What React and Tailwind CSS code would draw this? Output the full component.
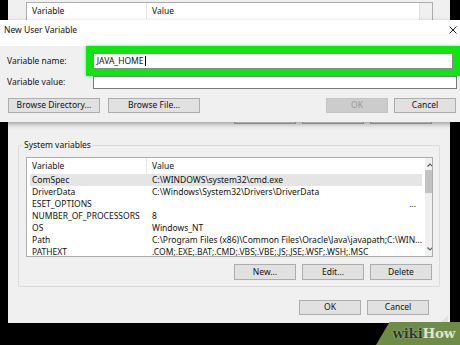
import React from "react";

const rows = [
  ["ComSpec", "C:\\WINDOWS\\system32\\cmd.exe", true],
  ["DriverData", "C:\\Windows\\System32\\Drivers\\DriverData"],
  ["ESET_OPTIONS", "", false, true],
  ["NUMBER_OF_PROCESSORS", "8"],
  ["OS", "Windows_NT"],
  ["Path", "C:\\Program Files (x86)\\Common Files\\Oracle\\Java\\javapath;C:\\WIN..."],
  ["PATHEXT", ".COM;.EXE;.BAT;.CMD;.VBS;.VBE;.JS;.JSE;.WSF;.WSH;.MSC"],
];

function Btn({ children, className = "", disabled = false }) {
  return (
    <div
      className={
        "flex items-center justify-center border " +
        (disabled
          ? "border-[#c4c4c4] bg-[#cccccc] text-[#9a9a9a] "
          : "border-[#adadad] bg-[#e1e1e1] text-[#111] ") +
        className
      }
    >
      {children}
    </div>
  );
}

export default function App() {
  return (
    <div className="relative w-[460px] h-[345px] bg-black overflow-hidden font-['Noto_Sans',sans-serif] text-[8.5px] text-[#111]">
      {/* Back window: Environment Variables */}
      <div className="absolute left-[8px] top-0 w-[442px] h-[323px] bg-[#f0f0f0] flex flex-col">
        {/* user variables list (mostly hidden) */}
        <div className="ml-[18px] mt-[2px] w-[407px] h-[104px] border border-[#adadad] bg-white flex">
          <div className="flex-1 flex h-[16px] items-center">
            <div className="w-[120px] pl-[5px] border-r border-[#e5e5e5] h-full flex items-center">Variable</div>
            <div className="pl-[5px]">Value</div>
          </div>
          <div className="w-[13px] border-l border-[#e0e0e0] bg-[#f0f0f0]" />
        </div>
        <div className="mt-[2px] h-[16px] flex justify-end gap-[6px] pr-[18px]">
          <Btn className="w-[62px]">New...</Btn>
          <Btn className="w-[62px]">Edit...</Btn>
          <Btn className="w-[62px]">Delete</Btn>
        </div>

        {/* System variables group */}
        <div className="mt-[21px] ml-[10px] w-[422px] h-[142px] border border-[#dcdcdc] rounded-[2px] flex flex-col relative">
          <div className="absolute left-[4px] top-[-7px] px-[1px] bg-[#f0f0f0] leading-[12px]">System variables</div>
          <div className="ml-[7px] mt-[11px] w-[407px] h-[100px] border border-[#adadad] bg-white flex overflow-hidden">
            <div className="flex-1 flex flex-col">
              <div className="flex h-[16px] items-center shrink-0">
                <div className="w-[120px] pl-[5px] border-r border-[#e5e5e5] h-full flex items-center">Variable</div>
                <div className="pl-[5px]">Value</div>
              </div>
              {rows.map(([k, v, sel, dots]) => (
                <div
                  key={k}
                  className={
                    "flex h-[12px] items-center shrink-0 mx-[3px] leading-[12px] whitespace-nowrap " +
                    (sel ? "bg-[#e5e5e5]" : "")
                  }
                >
                  <div className="w-[117px] pl-[2px]">{k}</div>
                  <div className="pl-[5px] flex-1 flex">
                    <span>{v}</span>
                    {dots && <span className="ml-auto mr-[6px]">...</span>}
                  </div>
                </div>
              ))}
            </div>
            <div className="w-[12px] bg-[#f0f0f0] flex flex-col items-center">
              <svg width="8" height="8" viewBox="0 0 8 8" className="mt-[3px]">
                <path d="M1.5 5.5 L4 3 L6.5 5.5" fill="none" stroke="#606060" strokeWidth="1.2" />
              </svg>
              <div className="mt-[1px] w-[10px] h-[23px] bg-[#c2c2c2]" />
              <div className="flex-1" />
              <svg width="8" height="8" viewBox="0 0 8 8" className="mb-[3px]">
                <path d="M1.5 2.5 L4 5 L6.5 2.5" fill="none" stroke="#606060" strokeWidth="1.2" />
              </svg>
            </div>
          </div>
          <div className="mt-[7px] h-[16px] flex justify-end gap-[6px] pr-[7px]">
            <Btn className="w-[62px]">New...</Btn>
            <Btn className="w-[62px]">Edit...</Btn>
            <Btn className="w-[62px]">Delete</Btn>
          </div>
        </div>

        <div className="mt-[13px] h-[15px] flex justify-end gap-[6px] pr-[21px]">
          <Btn className="w-[62px]">OK</Btn>
          <Btn className="w-[62px]">Cancel</Btn>
        </div>
        <div className="flex-1 flex items-end justify-end pr-[2px] pb-[1px]">
          <svg width="6" height="6" viewBox="0 0 6 6">
            <circle cx="5" cy="1" r="0.6" fill="#b0b0b0" />
            <circle cx="5" cy="3" r="0.6" fill="#b0b0b0" />
            <circle cx="3" cy="3" r="0.6" fill="#b0b0b0" />
            <circle cx="5" cy="5" r="0.6" fill="#b0b0b0" />
            <circle cx="3" cy="5" r="0.6" fill="#b0b0b0" />
            <circle cx="1" cy="5" r="0.6" fill="#b0b0b0" />
          </svg>
        </div>
      </div>

      {/* Dialog: New User Variable */}
      <div className="absolute left-0 top-[20px] w-[460px] h-[102px] bg-[#f0f0f0] flex flex-col shadow-[0_2px_5px_rgba(0,0,0,0.35)]">
        <div className="h-[20px] bg-white flex items-center justify-between pl-[4px] pr-[2px] shrink-0">
          <span className="text-[8.5px]">New User Variable</span>
          <svg width="10" height="10" viewBox="0 0 10 10">
            <path d="M1.5 1.5 L8.5 8.5 M8.5 1.5 L1.5 8.5" stroke="#222" strokeWidth="1" />
          </svg>
        </div>
        <div className="h-[6px] bg-white shrink-0" />
        <div className="flex items-center h-[30px] shrink-0">
          <div className="w-[87px] pl-[7px]">Variable name:</div>
          <div className="w-[380px] h-[30px] border-[7px] border-[#12e312] bg-white flex items-center shadow-[0_0_3px_#4cf04c]">
            <div className="w-full h-full bg-white border border-[#8a8a8a] flex items-center pl-[3px]">
              <span>JAVA_HOME</span>
              <span className="ml-[1px] w-[1px] h-[10px] bg-black" />
            </div>
          </div>
        </div>
        <div className="flex items-center h-[13px] shrink-0">
          <div className="w-[93px] pl-[7px]">Variable value:</div>
          <div className="w-[364px] h-[13px] border border-[#7a7a7a] bg-white" />
        </div>
        <div className="mt-[9px] h-[15px] flex pl-[8px] pr-[4px] shrink-0">
          <Btn className="w-[92px]">Browse Directory...</Btn>
          <Btn className="w-[92px] ml-[8px]">Browse File...</Btn>
          <div className="flex-1" />
          <Btn disabled className="w-[62px]">OK</Btn>
          <Btn className="w-[62px] ml-[6px]">Cancel</Btn>
        </div>
      </div>

      {/* wikiHow watermark */}
      <div className="absolute right-0 bottom-0 w-[84px] h-[23px] bg-[#6f8c47] [clip-path:polygon(16%_0,100%_0,100%_100%,0_100%)] flex items-center justify-end pr-[5px]">
        <span className="font-['DejaVu_Serif',serif] font-bold text-[13.5px] leading-none tracking-[-0.3px]">
          <span className="text-[#2c3a1e] [text-shadow:0_0_1px_#e8eedd]">wiki</span>
          <span className="text-[#dfe5d4]">How</span>
        </span>
      </div>
    </div>
  );
}
